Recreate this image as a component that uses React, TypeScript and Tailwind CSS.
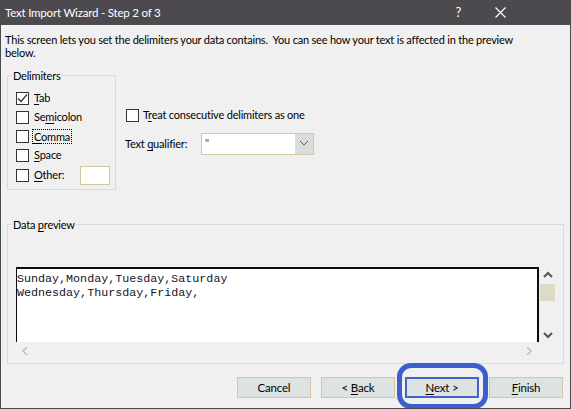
import React from 'react';

const ui = "font-['Lato',sans-serif] tracking-[-0.2px]";

// access-key letter, as Windows draws it
const U = ({ children }: { children: React.ReactNode }) => <span className="underline underline-offset-2">{children}</span>;

const Check = ({ checked = false }: { checked?: boolean }) => (
  <span className="w-[13px] h-[13px] border border-[#333] bg-white flex items-center justify-center shrink-0">
    {checked && (
      <svg width="11" height="11" viewBox="0 0 11 11">
        <polyline points="1,5.5 4,8.5 10,1.5" fill="none" stroke="#333" strokeWidth="1.2" />
      </svg>
    )}
  </span>
);

const Chevron = ({ dir, color = '#555', w = 2 }: { dir: 'up' | 'down' | 'left' | 'right'; color?: string; w?: number }) => {
  const pts = {
    up: '1,6 5,2 9,6',
    down: '1,2 5,6 9,2',
    left: '6,1 2,5 6,9',
    right: '2,1 6,5 2,9',
  }[dir];
  return (
    <svg width="10" height="10" viewBox="0 0 10 10">
      <polyline points={pts} fill="none" stroke={color} strokeWidth={w} />
    </svg>
  );
};

const Button = ({ children, focused = false }: { children: React.ReactNode; focused?: boolean }) => (
  <button
    className={`w-[74px] h-[21px] flex items-center justify-center text-[11.5px] text-black bg-[#dde2e2] ${
      focused ? 'border-2 border-[#4064c8]' : 'border border-[#d4c7a3]'
    }`}
  >
    <span className="whitespace-pre">{children}</span>
  </button>
);

export default function App() {
  const delimiters: { label: React.ReactNode; checked?: boolean; focus?: boolean }[] = [
    { label: <><U>T</U>ab</>, checked: true },
    { label: <>Se<U>m</U>icolon</> },
    { label: <><U>C</U>omma</>, focus: true },
    { label: <><U>S</U>pace</> },
  ];

  return (
    <div className={`${ui} relative w-[571px] h-[409px] bg-[#f0f0f0] border-x border-b border-[#4a4a4d] flex flex-col text-black overflow-hidden`}>
      {/* Title bar */}
      <div className="h-[25px] bg-[#4c4a4f] flex items-center pl-[4px] pr-[64px] text-white text-[11.5px] shrink-0">
        <span className="flex-1">Text Import Wizard - Step 2 of 3</span>
        <span className="text-[13px] mr-[34px]">?</span>
        <svg width="11" height="11" viewBox="0 0 11 11">
          <path d="M0.5 0.5 L10.5 10.5 M10.5 0.5 L0.5 10.5" stroke="white" strokeWidth="1.2" />
        </svg>
      </div>

      <p className="ml-[4px] w-[512px] pt-[8px] text-[11px] leading-[13px]">
        This screen lets you set the delimiters your data contains.&nbsp; You can see how your text is affected in the preview below.
      </p>

      <div className="flex mt-[10px]">
        {/* Delimiters */}
        <fieldset className="ml-[6px] w-[109px] h-[121px] border border-[#d6dcdc] pl-[8px] pt-[7px]">
          <legend className="ml-[-4px] px-[1px] text-[11px] leading-[13px]">Delimiters</legend>
          {delimiters.map((d, i) => (
            <div key={i} className="h-[19px] flex items-center gap-[3px] text-[11px]">
              <Check checked={d.checked} />
              <span className={d.focus ? 'border border-dotted border-black px-[1px] leading-[13px]' : 'px-[2px]'}>{d.label}</span>
            </div>
          ))}
          <div className="h-[20px] flex items-center gap-[3px] text-[11px]">
            <Check />
            <span className="px-[2px] w-[45px]"><U>O</U>ther:</span>
            <span className="w-[30px] h-[19px] bg-white border border-[#d4c7a3]" />
          </div>
        </fieldset>

        <div className="ml-[10px] flex flex-col text-[11px]">
          <div className="mt-[40px] h-[13px] flex items-center gap-[4px]">
            <Check />
            <span>T<U>r</U>eat consecutive delimiters as one</span>
          </div>
          <div className="mt-[11px] flex items-center">
            <span className="w-[76px] -ml-[1px]">Text <U>q</U>ualifier:</span>
            <div className="w-[113px] h-[22px] bg-white border border-[#d4c7a3] flex">
              <span className="flex-1 pl-[3px] text-[#2b3fb0] text-[11px] leading-[18px]">"</span>
              <span className="w-[18px] bg-[#d9dedd] flex items-center justify-center">
                <Chevron dir="down" color="#606060" w={1} />
              </span>
            </div>
          </div>
        </div>
      </div>

      {/* Data preview */}
      <fieldset className="ml-[6px] mt-[28px] w-[557px] h-[146px] border border-[#d6dcdc] pl-[8px] pt-[36px]">
        <legend className="ml-[-4px] px-[1px] text-[11px] leading-[13px]">
          Data <U>p</U>review
        </legend>
        <div className="w-[540px] h-[92px] flex flex-col">
          <div className="flex h-[75px]">
            <div className="w-[523px] bg-white border-t-2 border-l border-r-2 border-[#120810] font-['Liberation_Mono',monospace] text-[11.7px] leading-[14px] tracking-normal text-[#141428] pt-[3px]">
              <div>Sunday,Monday,Tuesday,Saturday</div>
              <div>Wednesday,Thursday,Friday,</div>
            </div>
            <div className="flex-1 flex flex-col items-center pt-[4px]">
              <Chevron dir="up" />
              <span className="mt-[3px] w-[15px] h-[17px] bg-[#dcdcc6]" />
              <span className="mt-auto mb-[1px]"><Chevron dir="down" /></span>
            </div>
          </div>
          <div className="h-[17px] flex items-center justify-between pl-[5px] pr-[21px]">
            <Chevron dir="left" color="#cdbf95" w={1.5} />
            <Chevron dir="right" color="#cdbf95" w={1.5} />
          </div>
        </div>
      </fieldset>

      {/* Buttons */}
      <div className="mt-[13px] flex justify-end gap-[10px] pr-[7px]">
        <Button>Cancel</Button>
        <Button>{'< '}<U>B</U>ack</Button>
        <Button focused><U>N</U>ext {'>'}</Button>
        <Button><U>F</U>inish</Button>
      </div>

      {/* Highlight drawn over the Next button */}
      <div className="absolute left-[396px] top-[363px] w-[91px] h-[46px] border-[5px] border-[#3b5fcf] rounded-[14px]" />
    </div>
  );
}
